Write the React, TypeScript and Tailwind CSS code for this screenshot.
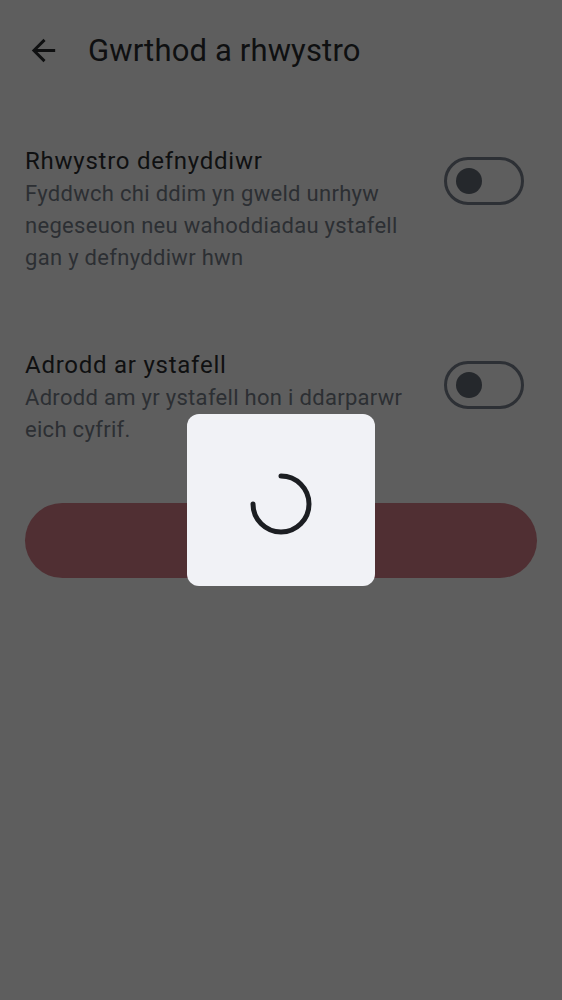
function Toggle() {
  return (
    <div className="mt-[12px] flex h-[48px] w-[80px] shrink-0 items-center rounded-full border-[3px] border-[#2d3035] pl-[9px]">
      <div className="h-[26px] w-[26px] rounded-full bg-[#25282c]" />
    </div>
  );
}

function Row({ title, desc }: { title: string; desc: string }) {
  return (
    <div className="flex items-start gap-6">
      <div className="flex-1">
        <div className="text-[24px] leading-[32px] tracking-[0.75px] text-[#0f1011]">{title}</div>
        <div className="mt-[1px] text-[22px] leading-[32px] tracking-[0.3px] text-[#2c2f33]">{desc}</div>
      </div>
      <Toggle />
    </div>
  );
}

export default function App() {
  return (
    <div className="relative min-h-[1000px] w-full bg-[#5e5e5e] font-['Roboto',sans-serif]">
      <header className="flex h-[100px] items-center pl-[26px]">
        <svg width="35" height="35" viewBox="0 0 24 24" className="shrink-0">
          <path
            d="M20 11H7.83l5.59-5.59L12 4l-8 8 8 8 1.41-1.41L7.83 13H20v-2z"
            fill="#0f1011"
          />
        </svg>
        <h1 className="ml-[27px] text-[31px] leading-none tracking-[0.15px] text-[#0f1011]">Gwrthod a rhwystro</h1>
      </header>

      <div className="flex flex-col pl-[25px] pr-[38px] pt-[45px]">
        <Row
          title="Rhwystro defnyddiwr"
          desc="Fyddwch chi ddim yn gweld unrhyw negeseuon neu wahoddiadau ystafell gan y defnyddiwr hwn"
        />
        <div className="h-[75px]" />
        <Row title="Adrodd ar ystafell" desc="Adrodd am yr ystafell hon i ddarparwr eich cyfrif." />
      </div>

      <div className="mt-[57px] px-[25px]">
        <div className="h-[75px] w-full rounded-full bg-[#502f33]" />
      </div>

      <div className="fixed inset-0 flex items-center justify-center">
        <div className="flex h-[172px] w-[188px] items-center justify-center rounded-[12px] bg-[#f1f2f6]">
          <svg width="68" height="68" viewBox="0 0 68 68" className="mt-[8px]">
            <path
              d="M34 6 A28 28 0 1 1 6 34"
              fill="none"
              stroke="#1c1e22"
              strokeWidth="5"
              strokeLinecap="round"
            />
          </svg>
        </div>
      </div>
    </div>
  );
}
